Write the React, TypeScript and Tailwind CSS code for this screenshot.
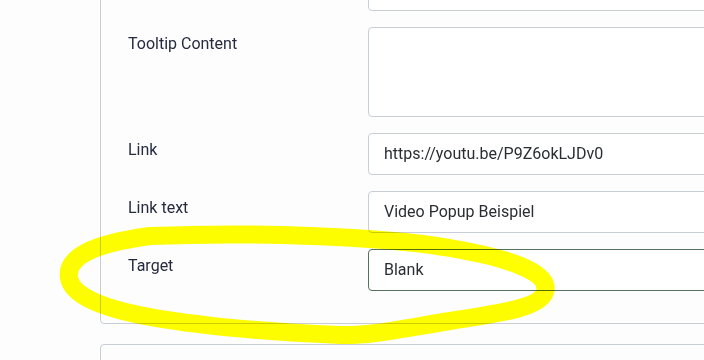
import type { ReactNode } from 'react';

interface FieldRow {
  label: string;
  value?: string;
  multiline?: boolean;
  focused?: boolean;
}

// first row is scrolled out of view; its label sits above the viewport
const rows: FieldRow[] = [
  { label: '', value: '' },
  { label: 'Tooltip Content', multiline: true },
  { label: 'Link', value: 'https://youtu.be/P9Z6okLJDv0' },
  { label: 'Link text', value: 'Video Popup Beispiel' },
  { label: 'Target', value: 'Blank', focused: true },
];

function FieldLabel({ children }: { children: ReactNode }) {
  return (
    <label className="pt-[5px] text-[16px] leading-6 text-[#262a3e]">
      {children}
    </label>
  );
}

function FieldControl({ row }: { row: FieldRow }) {
  if (row.multiline) {
    return (
      <div className="h-[90px] rounded-[4px] border border-[#c9ced6] bg-white" />
    );
  }

  return (
    <div
      className={
        row.focused
          ? 'flex h-[42px] items-center rounded-[4px] border border-[#55705d] bg-white px-[15px]'
          : 'flex h-[42px] items-center rounded-[4px] border border-[#c9ced6] bg-white px-[15px]'
      }
    >
      <span className="text-[16px] leading-6 text-[#2a2e33]">{row.value}</span>
    </div>
  );
}

function Highlight() {
  return (
    <svg
      className="pointer-events-none absolute left-0 top-0 mix-blend-multiply"
      width="704"
      height="360"
      viewBox="0 0 704 360"
    >
      <path
        d="M150 236 C250 232 380 236 450 248 C520 260 550 275 545 292 C540 308 500 313 450 321 C400 329 370 336 340 335 C270 332 200 326 150 317 C100 308 72 295 69 278 C66 258 90 244 150 236 Z"
        fill="none"
        stroke="#ffff00"
        strokeWidth="18"
        strokeLinecap="round"
        strokeLinejoin="round"
      />
    </svg>
  );
}

export default function App() {
  return (
    <div className="relative h-[360px] w-[704px] overflow-hidden bg-[#fdfdfe] font-['Roboto',sans-serif]">
      <div className="-mt-[49px] pl-[100px]">
        <div className="w-[720px] rounded-[4px] border border-[#c9ced6] pb-[32px] pl-[27px] pt-[17px]">
          <div className="grid grid-cols-[240px_1fr] gap-y-4">
            {rows.map((row, i) => (
              <div key={i} className="contents">
                <FieldLabel>{row.label}</FieldLabel>
                <FieldControl row={row} />
              </div>
            ))}
          </div>
        </div>
        <div className="mt-[20px] h-[60px] w-[720px] rounded-[4px] border border-[#c9ced6]" />
      </div>
      <Highlight />
    </div>
  );
}
